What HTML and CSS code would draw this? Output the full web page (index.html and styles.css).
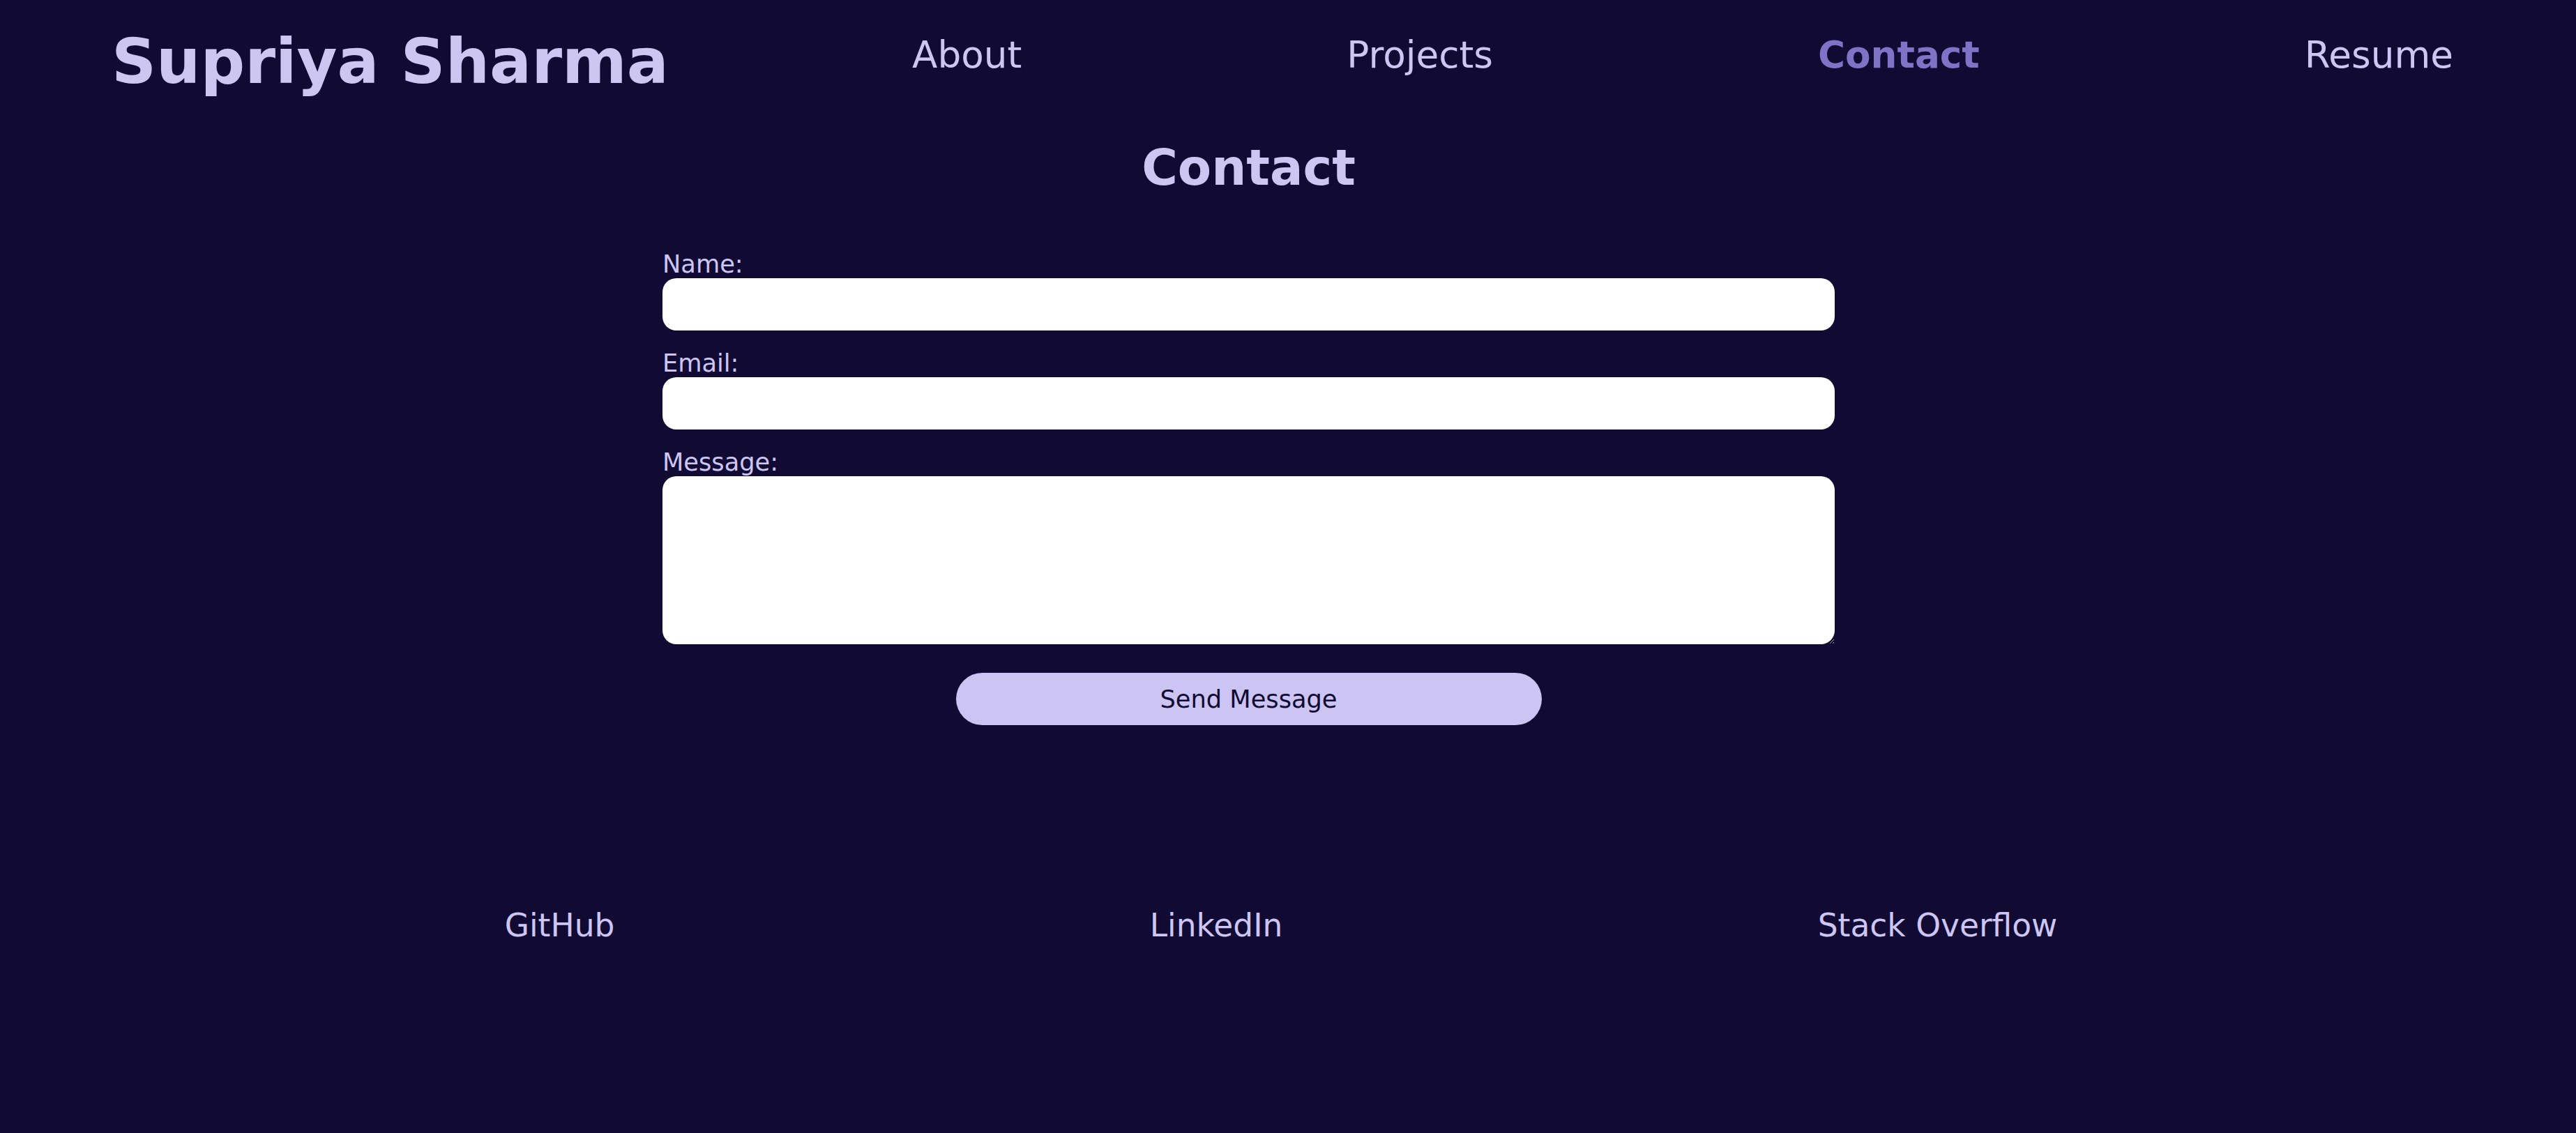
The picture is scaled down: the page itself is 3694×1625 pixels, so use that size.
FILE: index.html
```html
<!DOCTYPE html>
<html lang="en">
<head>
<meta charset="utf-8">
<title>Supriya Sharma - Contact</title>
<link rel="stylesheet" href="styles.css">
</head>
<body>
<header class="site-header">
  <h1 class="logo">Supriya Sharma</h1>
  <nav class="main-nav">
    <ul class="nav-list">
      <li><a class="nav-link" href="#about">About</a></li>
      <li><a class="nav-link" href="#projects">Projects</a></li>
      <li><a class="nav-link nav-link--active" href="#contact">Contact</a></li>
      <li><a class="nav-link" href="#resume">Resume</a></li>
    </ul>
  </nav>
</header>
<main class="contact">
  <h2 class="contact-title">Contact</h2>
  <form class="contact-form">
    <label class="field-label" for="name">Name:</label>
    <input class="field-input" type="text" id="name" name="name">
    <label class="field-label" for="email">Email:</label>
    <input class="field-input" type="email" id="email" name="email">
    <label class="field-label" for="message">Message:</label>
    <textarea class="field-input field-textarea" id="message" name="message"></textarea>
    <button class="send-btn" type="submit">Send Message</button>
  </form>
</main>
<footer class="site-footer">
  <ul class="social-list">
    <li><a class="social-link" href="#github">GitHub</a></li>
    <li><a class="social-link" href="#linkedin">LinkedIn</a></li>
    <li><a class="social-link" href="#stackoverflow">Stack Overflow</a></li>
  </ul>
</footer>
</body>
</html>
```

FILE: styles.css
```css
* {
  box-sizing: border-box;
}

html, body {
  margin: 0;
  padding: 0;
}

body {
  background: #110b33;
  color: #cdc6f3;
  font-family: "DejaVu Sans", Verdana, sans-serif;
  min-height: 1625px;
}

.site-header {
  display: flex;
  justify-content: space-between;
  align-items: flex-start;
  padding: 36px 176px 0 160px;
}

.logo {
  margin: 0;
  font-size: 89px;
  font-weight: bold;
  line-height: normal;
  color: #cdc6f3;
}

.nav-list {
  list-style: none;
  margin: 12px 0 0 0;
  padding: 0;
  display: flex;
  gap: 466px;
}

.nav-link {
  font-size: 53.2px;
  line-height: normal;
  color: #cdc6f3;
  text-decoration: none;
}

.nav-link--active {
  color: #7f73c7;
  font-weight: bold;
}

.contact {
  display: flex;
  flex-direction: column;
  align-items: center;
  padding: 60px 113px 0 0;
}

.contact-title {
  margin: 0;
  font-size: 70.4px;
  font-weight: bold;
  line-height: normal;
  color: #cdc6f3;
}

.contact-form {
  width: 1681px;
  margin-top: 78px;
  display: flex;
  flex-direction: column;
}

.field-label {
  display: block;
  font-size: 35.2px;
  line-height: 40px;
  color: #cdc6f3;
  margin-top: -1px;
}

.field-input {
  display: block;
  width: 100%;
  height: 75px;
  border: none;
  border-radius: 20px;
  background: #ffffff;
  margin: 0 0 28px 0;
  font-family: "DejaVu Sans", Verdana, sans-serif;
  font-size: 35.2px;
  padding: 0 22px;
}

.field-textarea {
  height: 241px;
  margin-bottom: 41px;
  padding: 22px;
}

.send-btn {
  align-self: center;
  width: 840px;
  height: 75px;
  border: none;
  border-radius: 38px;
  background: #ccc4f2;
  color: #110b33;
  font-family: "DejaVu Sans", Verdana, sans-serif;
  font-size: 35.2px;
  cursor: pointer;
}

.site-footer {
  margin-top: 261px;
}

.social-list {
  list-style: none;
  margin: 0;
  padding: 0 360px 0 340px;
  display: flex;
  justify-content: space-around;
}

.social-link {
  font-size: 45.5px;
  line-height: normal;
  color: #cdc6f3;
  text-decoration: none;
}
```
